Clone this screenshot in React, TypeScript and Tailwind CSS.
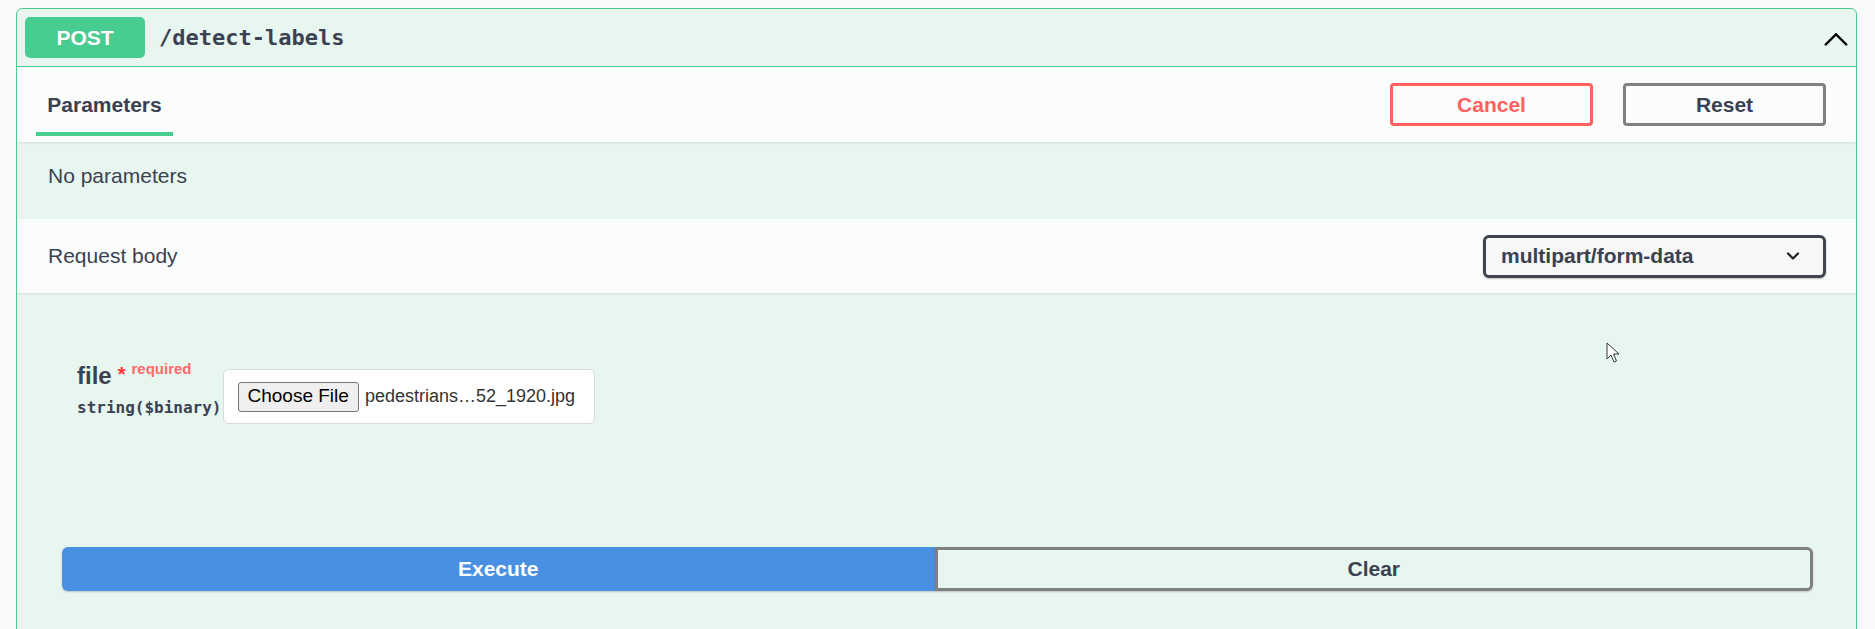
import React from 'react';

const sans = { fontFamily: '"Liberation Sans", Arial, sans-serif' };

const ChevronUp = () => (
  <svg width="30" height="30" viewBox="0 0 20 20" aria-hidden="true">
    <path
      fill="#000"
      d="M17.418 14.908c-.311.31-.815.31-1.126 0L10 8.615l-6.291 6.293c-.311.31-.815.31-1.126 0-.311-.312-.311-.816 0-1.127l6.855-6.857c.311-.311.815-.311 1.126 0l6.855 6.857c.311.311.311.815-.001 1.127z"
    />
  </svg>
);

const ChevronDown = () => (
  <svg width="16" height="16" viewBox="0 0 16 16" aria-hidden="true">
    <path d="M3 5.5l5 5 5-5" fill="none" stroke="#222" strokeWidth="2.2" strokeLinecap="round" strokeLinejoin="round" />
  </svg>
);

export default function App() {
  return (
    <div className="relative min-h-[629px] bg-[#fafafa] pt-2 pl-4 pr-[18px] text-[#3b4151]" style={sans}>
      <div className="overflow-hidden rounded-[6px] border border-[#49cc90] bg-[#e8f6f0]">
        {/* summary */}
        <div className="flex h-[58px] items-center border-b border-[#49cc90] pl-2 pr-[5px]">
          <span className="flex h-[41px] w-[120px] items-center justify-center rounded-[5px] bg-[#49cc90] text-[21px] font-bold text-white">
            POST
          </span>
          <span
            className="ml-[14px] text-[22px] font-bold text-[#3b4151]"
            style={{ fontFamily: '"DejaVu Sans Mono", monospace' }}
          >
            /detect-labels
          </span>
          <span className="ml-auto flex">
            <ChevronUp />
          </span>
        </div>

        {/* tab header */}
        <div className="flex h-[75px] items-center bg-white/80 pl-[19px] pr-[30px] shadow-[0_1px_2px_rgba(0,0,0,0.1)]">
          <div className="flex h-full w-[137px] flex-col items-center justify-end">
            <span className="text-[21px] font-bold">Parameters</span>
            <span className="mt-[12px] mb-[6px] h-[4px] w-full bg-[#49cc90]" />
          </div>
          <div className="ml-auto flex gap-[30px]">
            <button className="h-[43px] w-[203px] rounded-[4px] border-[3px] border-[#ff6060] bg-transparent text-[21px] font-bold text-[#ff6060]">
              Cancel
            </button>
            <button className="h-[43px] w-[203px] rounded-[4px] border-[3px] border-[#808080] bg-transparent text-[21px] font-bold text-[#3b4151]">
              Reset
            </button>
          </div>
        </div>

        {/* parameters body */}
        <div className="h-[77px] px-[31px] pt-[22px] text-[21px] leading-[24px]">No parameters</div>

        {/* request body header */}
        <div className="flex h-[74px] items-center justify-between bg-white/80 pl-[31px] pr-[30px] shadow-[0_1px_2px_rgba(0,0,0,0.1)]">
          <span className="text-[21px]">Request body</span>
          <div className="flex h-[43px] w-[343px] items-center justify-between rounded-[6px] border-[3px] border-[#41444e] bg-[#f7f7f7] pl-[15px] pr-[22px] shadow-[0_1px_2px_rgba(0,0,0,0.25)]">
            <span className="text-[21px] font-bold">multipart/form-data</span>
            <ChevronDown />
          </div>
        </div>

        {/* request body content */}
        <div className="pt-[76px] pb-[60px]">
          <div className="flex items-start pl-[60px]">
            <div className="-mt-[5px] flex flex-col">
              <div className="flex items-start">
                <span className="text-[24px] font-bold leading-[24px]">file</span>
                <span className="ml-[6px] text-[20px] font-bold leading-[20px] text-[#ff3030]">*</span>
                <span className="ml-[6px] -mt-[6px] text-[15px] font-bold text-[#ff6a6a]">required</span>
              </div>
              <span
                className="mt-[8px] text-[16px] font-bold text-[#3b4151]"
                style={{ fontFamily: '"DejaVu Sans Mono", monospace' }}
              >
                string($binary)
              </span>
            </div>
            <div className="ml-[1px] flex h-[55px] w-[372px] shrink-0 items-center whitespace-nowrap rounded-[6px] border border-[#d9d9d9] bg-white pl-[14px]">
              <span className="flex h-[30px] shrink-0 items-center rounded-[3px] border border-[#767676] bg-[#efefef] px-[9px] text-[19px] text-black">
                Choose File
              </span>
              <span className="ml-[6px] text-[18px] text-[#333]">pedestrians…52_1920.jpg</span>
            </div>
          </div>

          <div className="mt-[123px] flex pl-[45px] pr-[43px]">
            <button className="h-[44px] flex-1 rounded-l-[6px] bg-[#4990e2] text-[21px] font-bold text-white shadow-[0_1px_2px_rgba(0,0,0,0.2)]">
              Execute
            </button>
            <button className="h-[44px] flex-1 rounded-r-[6px] border-[3px] border-[#808080] bg-transparent text-[21px] font-bold text-[#3b4151] shadow-[0_1px_2px_rgba(0,0,0,0.2)]">
              Clear
            </button>
          </div>
        </div>
      </div>

      {/* mouse cursor */}
      <svg className="absolute left-[1606px] top-[342px]" width="14" height="21" viewBox="0 0 14 21" aria-hidden="true">
        <path d="M1 1v16l4-4 3 7 2.5-1-3-7h5.5z" fill="#fff" stroke="#333" strokeWidth="1" strokeLinejoin="round" />
      </svg>
    </div>
  );
}
